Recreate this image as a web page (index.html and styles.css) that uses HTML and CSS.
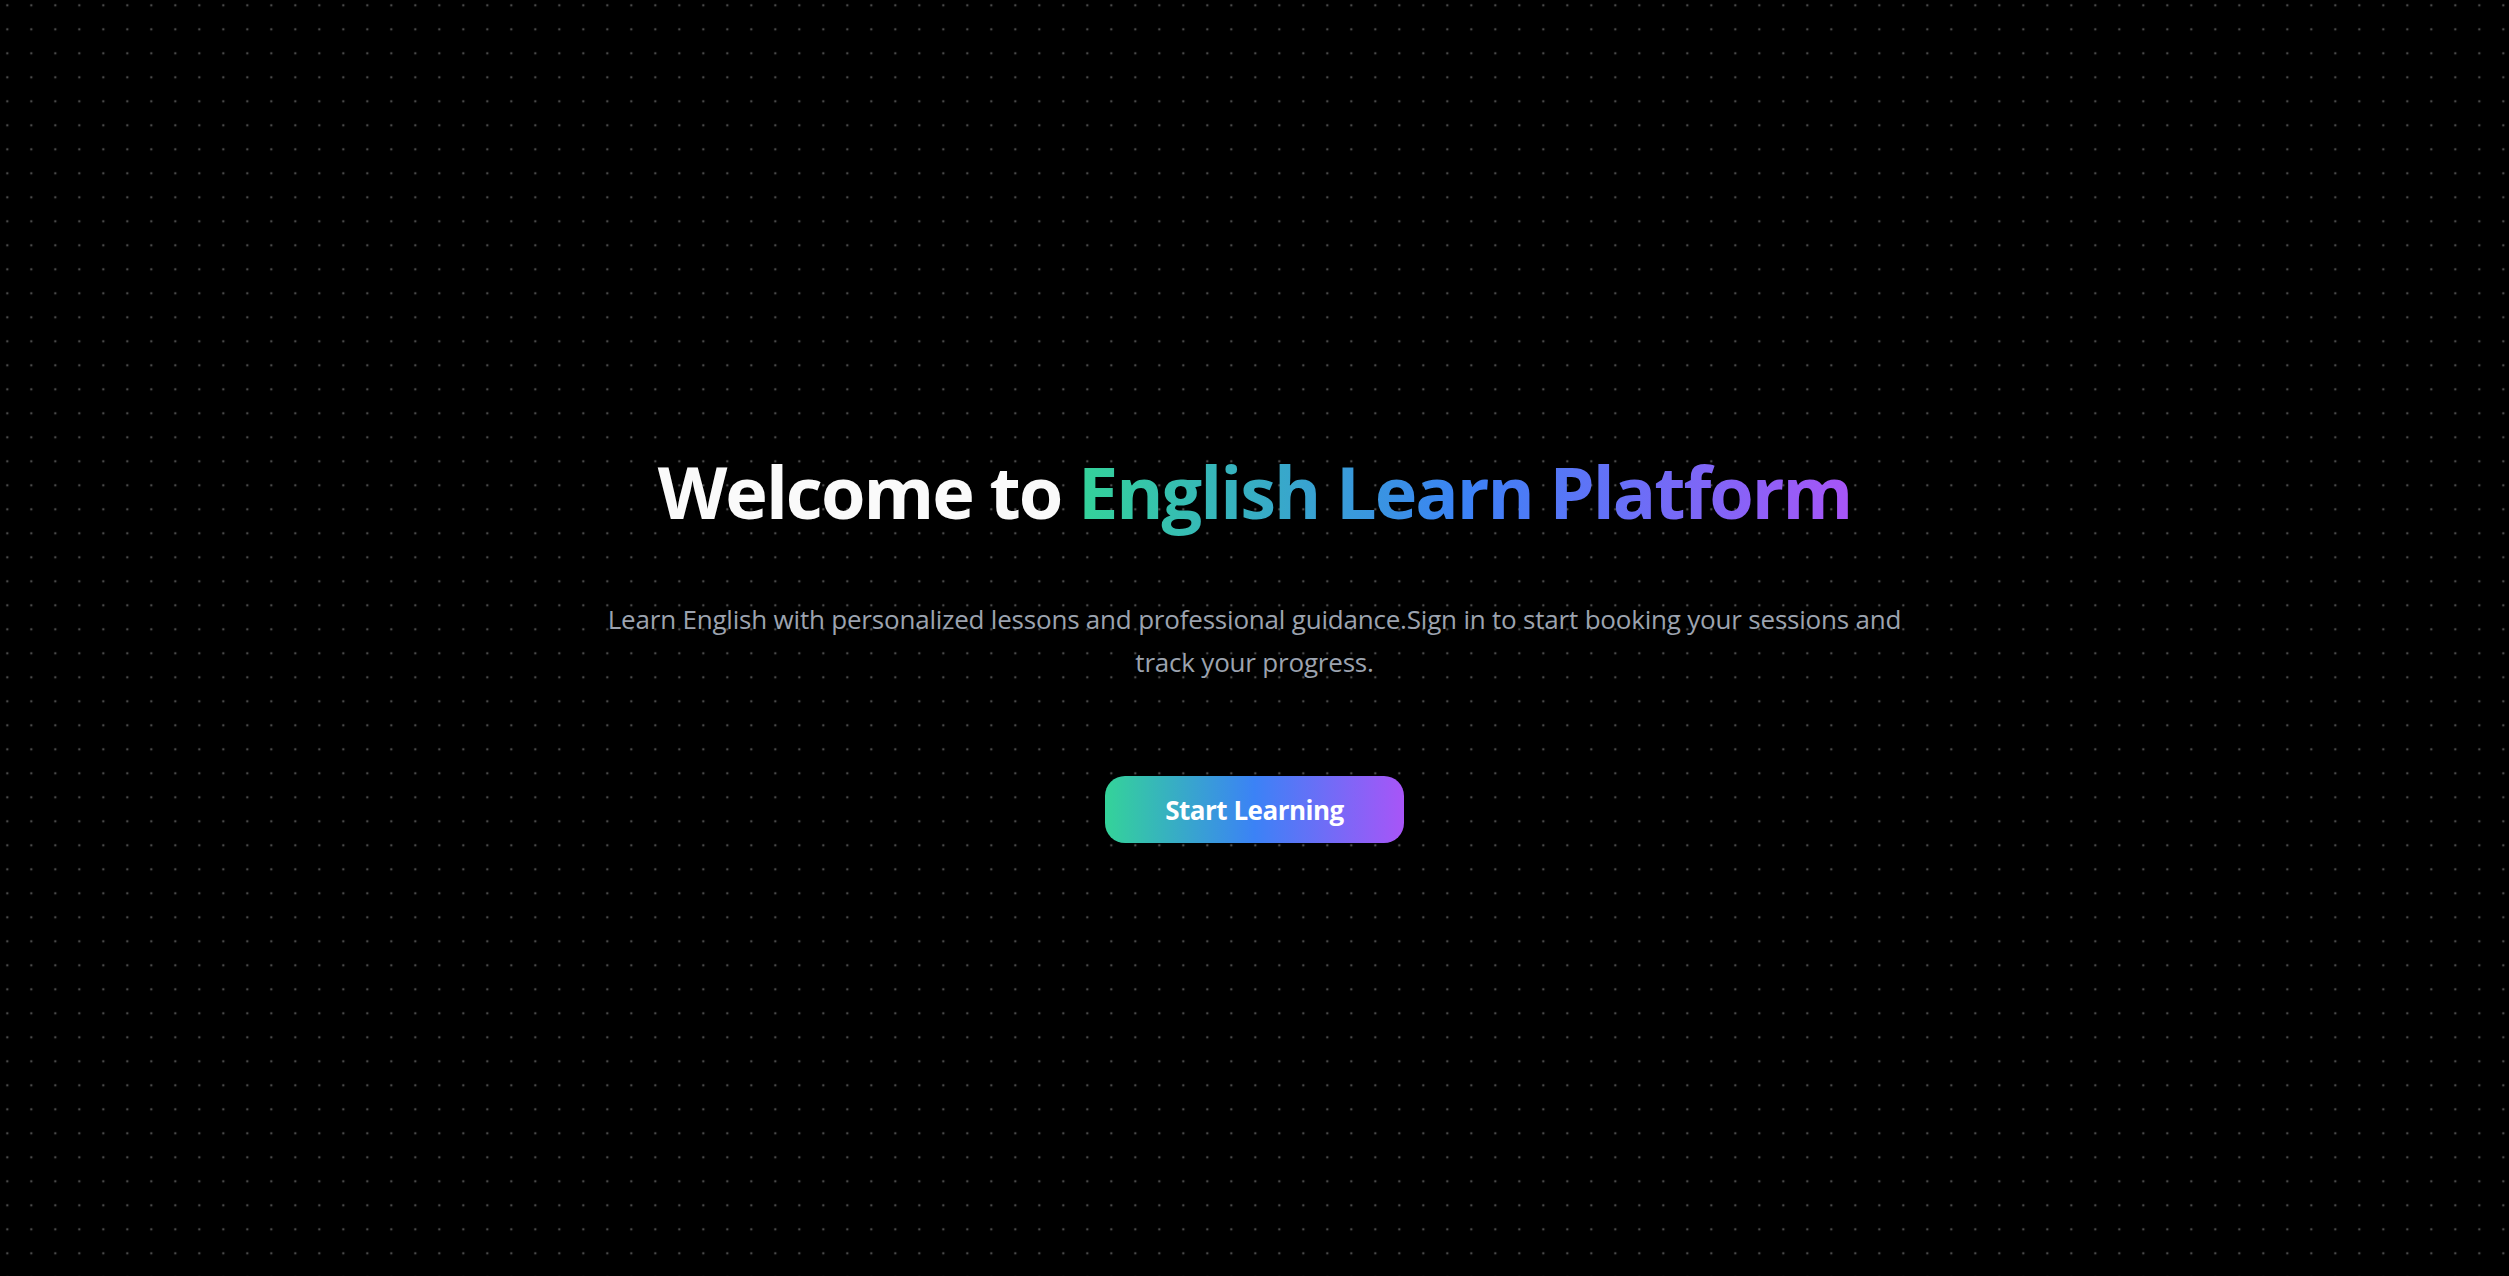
FILE: index.html
```html
<!DOCTYPE html>
<html lang="en">
<head>
<meta charset="utf-8">
<title>English Learn Platform</title>
<link rel="stylesheet" href="styles.css">
</head>
<body>
<main class="hero">
  <h1 class="hero-title">Welcome to <span class="gradient-text">English Learn Platform</span></h1>
  <p class="hero-text">Learn English with personalized lessons and professional guidance.Sign in to start booking your sessions and track your progress.</p>
  <button class="cta" type="button">Start Learning</button>
</main>
</body>
</html>
```

FILE: styles.css
```css
html, body {
  margin: 0;
  padding: 0;
  height: 100%;
}

body {
  background-color: #000;
  background-image: radial-gradient(circle at center, #4a4a4a 1.4px, transparent 1.6px);
  background-size: 24px 24px;
  background-position: -4.7px -6.7px;
  font-family: "Open Sans", "Noto Sans", sans-serif;
  color: #fff;
}

.hero {
  box-sizing: border-box;
  min-height: 100vh;
  padding-top: 15px;
  display: flex;
  flex-direction: column;
  align-items: center;
  justify-content: center;
  text-align: center;
}

.hero-title {
  margin: 0;
  font-size: 72px;
  line-height: 1.2;
  font-weight: 700;
  letter-spacing: -2px;
  color: #fafafa;
}

.gradient-text {
  background-image: linear-gradient(to right, #34d399, #3b82f6, #a855f7);
  -webkit-background-clip: text;
  background-clip: text;
  color: transparent;
}

.hero-text {
  margin: 64px 0 0;
  max-width: 1300px;
  font-size: 26px;
  line-height: 43px;
  letter-spacing: -0.2px;
  color: #9ca3af;
}

.cta {
  margin-top: 92px;
  height: 67px;
  padding: 0 60px;
  border: none;
  border-radius: 20px;
  background-image: linear-gradient(to right, #34d399, #3b82f6, #a855f7);
  color: #fff;
  font-family: inherit;
  font-size: 26px;
  font-weight: 700;
  letter-spacing: -0.5px;
  cursor: pointer;
}
```
